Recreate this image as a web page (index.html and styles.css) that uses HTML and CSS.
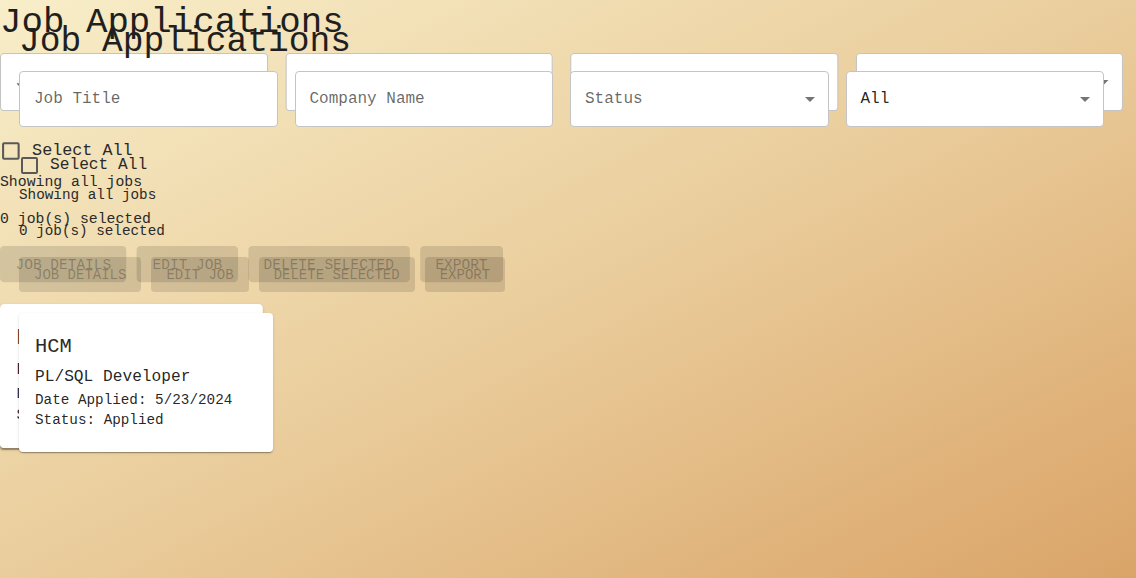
FILE: index.html
```html
<!DOCTYPE html>
<html lang="en">
<head>
<meta charset="utf-8">
<title>Job Applications</title>
<link rel="stylesheet" href="styles.css">
</head>
<body>
<div class="page ghost" aria-hidden="true">
  <h1 class="title">Job Applications</h1>
  <div class="filters">
    <div class="field"><span class="label">Job Title</span></div>
    <div class="field"><span class="label">Company Name</span></div>
    <div class="field select"><span class="label">Status</span><span class="arrow"></span></div>
    <div class="field select"><span class="value">All</span><span class="arrow"></span></div>
  </div>
  <label class="check-row"><span class="box"></span><span>Select All</span></label>
  <p class="info first">Showing all jobs</p>
  <p class="info second">0 job(s) selected</p>
  <div class="actions">
    <span class="btn">Job Details</span>
    <span class="btn">Edit Job</span>
    <span class="btn">Delete Selected</span>
    <span class="btn">Export</span>
  </div>
  <div class="card">
    <div class="company">HCM</div>
    <div class="role">PL/SQL Developer</div>
    <div class="meta">Date Applied: 5/23/2024</div>
    <div class="meta">Status: Applied</div>
  </div>
</div>

<main class="page front">
  <h1 class="title">Job Applications</h1>
  <div class="filters">
    <div class="field"><span class="label">Job Title</span></div>
    <div class="field"><span class="label">Company Name</span></div>
    <div class="field select"><span class="label">Status</span><span class="arrow"></span></div>
    <div class="field select"><span class="value">All</span><span class="arrow"></span></div>
  </div>
  <label class="check-row"><span class="box"></span><span>Select All</span></label>
  <p class="info first">Showing all jobs</p>
  <p class="info second">0 job(s) selected</p>
  <div class="actions">
    <button class="btn" disabled>Job Details</button>
    <button class="btn" disabled>Edit Job</button>
    <button class="btn" disabled>Delete Selected</button>
    <button class="btn" disabled>Export</button>
  </div>
  <div class="card">
    <div class="company">HCM</div>
    <div class="role">PL/SQL Developer</div>
    <div class="meta">Date Applied: 5/23/2024</div>
    <div class="meta">Status: Applied</div>
  </div>
</main>
</body>
</html>
```
FILE: styles.css
```css
* { box-sizing: border-box; }

html, body {
  margin: 0;
  min-height: 578px;
}

body {
  position: relative;
  overflow: hidden;
  height: 578px;
  background: linear-gradient(to bottom right, #f8eec9 0%, #eacd9c 50%, #daa468 100%);
  font-family: "Liberation Mono", "DejaVu Sans Mono", monospace;
  color: rgba(0, 0, 0, 0.87);
}

.page {
  width: 1136px;
  padding: 22px 32px 0 19px;
}

.front {
  position: relative;
  z-index: 1;
}

.ghost {
  position: absolute;
  top: 0;
  left: 0;
  transform-origin: 562px 557px;
  transform: scale(1.035, 1.037);
}

.title {
  margin: 0;
  font-size: 34.6px;
  line-height: 40px;
  font-weight: 400;
  color: #1f1f1f;
  letter-spacing: 0;
}

.filters {
  margin-top: 9px;
  display: grid;
  grid-template-columns: repeat(4, 1fr);
  gap: 17px;
  width: 1085px;
}

.field {
  height: 56px;
  background: #fff;
  border: 1px solid #c4c4c4;
  border-radius: 4px;
  display: flex;
  align-items: center;
  justify-content: space-between;
  padding: 0 13px 0 14px;
  font-size: 16px;
}

.label { color: rgba(0, 0, 0, 0.6); }
.value { color: rgba(0, 0, 0, 0.87); }

.arrow {
  width: 0;
  height: 0;
  border-left: 5px solid transparent;
  border-right: 5px solid transparent;
  border-top: 5px solid rgba(0, 0, 0, 0.54);
}

.check-row {
  margin-top: 29px;
  display: flex;
  align-items: center;
  gap: 12px;
  height: 18px;
  font-size: 16.2px;
  line-height: 18px;
  color: #2a2a2a;
}

.box {
  width: 17px;
  height: 17px;
  margin-left: 2px;
  border: 2px solid #595959;
  border-radius: 2px;
}

.info {
  margin: 0;
  font-size: 14.3px;
  line-height: 20px;
  color: #2a2a2a;
}

.info.first { margin-top: 11px; }
.info.second { margin-top: 16px; }

.actions {
  margin-top: 16px;
  display: flex;
  gap: 10px;
}

.btn {
  height: 35px;
  padding: 0 15px;
  border: 0;
  border-radius: 4px;
  background: rgba(0, 0, 0, 0.12);
  color: rgba(0, 0, 0, 0.26);
  font-family: inherit;
  font-size: 14px;
  text-transform: uppercase;
  display: inline-flex;
  align-items: center;
  justify-content: center;
}

.card {
  margin-top: 21px;
  width: 254px;
  background: #fff;
  border-radius: 4px;
  padding: 16px 16px 22px;
  box-shadow: 0 2px 1px -1px rgba(0, 0, 0, 0.2), 0 1px 1px 0 rgba(0, 0, 0, 0.14), 0 1px 3px 0 rgba(0, 0, 0, 0.12);
}

.company {
  margin-top: 4px;
  font-size: 20.4px;
  line-height: 28px;
  color: #2b2b2b;
}

.role {
  margin-top: 4px;
  font-size: 16.2px;
  line-height: 24px;
}

.meta {
  font-size: 14.3px;
  line-height: 20px;
}

.role + .meta { margin-top: 1px; }
```
